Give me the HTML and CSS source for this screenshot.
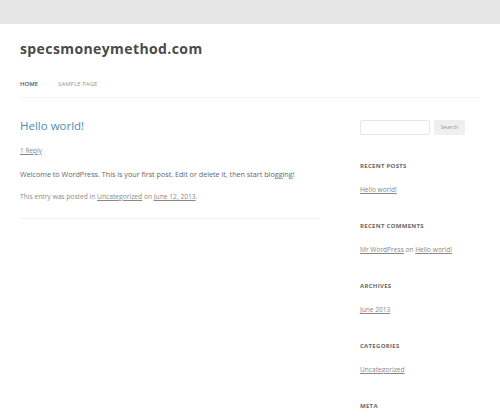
FILE: index.html
```html
<!DOCTYPE html>
<html>
<head>
<meta charset="utf-8">
<link rel="stylesheet" href="styles.css">
</head>
<body>
<div class="topband"></div>
<div class="page">
  <header class="site-header">
    <h1 class="site-title">specsmoneymethod.com</h1>
    <nav class="nav">
      <a class="nav-item current">HOME</a>
      <a class="nav-item">SAMPLE PAGE</a>
    </nav>
  </header>
  <div class="main">
    <div class="content">
      <article class="post">
        <h2 class="entry-title">Hello world!</h2>
        <div class="reply"><a>1 Reply</a></div>
        <p class="entry-content">Welcome to WordPress. This is your first post. Edit or delete it, then start blogging!</p>
        <p class="entry-meta">This entry was posted in <a>Uncategorized</a> on <a>June 12, 2013</a>.</p>
      </article>
    </div>
    <aside class="sidebar">
      <div class="search">
        <div class="search-input"></div>
        <div class="search-btn">Search</div>
      </div>
      <div class="widget">
        <h3 class="widget-title">RECENT POSTS</h3>
        <div class="widget-body"><a>Hello world!</a></div>
      </div>
      <div class="widget">
        <h3 class="widget-title">RECENT COMMENTS</h3>
        <div class="widget-body"><a>Mr WordPress</a> on <a>Hello world!</a></div>
      </div>
      <div class="widget">
        <h3 class="widget-title">ARCHIVES</h3>
        <div class="widget-body"><a>June 2013</a></div>
      </div>
      <div class="widget">
        <h3 class="widget-title">CATEGORIES</h3>
        <div class="widget-body"><a>Uncategorized</a></div>
      </div>
      <div class="widget">
        <h3 class="widget-title">META</h3>
      </div>
    </aside>
  </div>
</div>
</body>
</html>
```
FILE: styles.css
```css
html, body {
  margin: 0;
  padding: 0;
  background: #ffffff;
  font-family: "Open Sans", "Liberation Sans", sans-serif;
  color: #444;
  overflow: hidden;
}
.topband {
  height: 24px;
  background: #e6e6e6;
}
.page {
  padding: 0 20px;
}
.site-header {
  padding-top: 15px;
}
.site-title {
  margin: 0;
  font-size: 14px;
  font-weight: 700;
  letter-spacing: 0.4px;
  line-height: 20px;
  color: #4a4a4a;
}
.nav {
  display: flex;
  gap: 20px;
  margin-top: 21px;
  padding-bottom: 9px;
  border-bottom: 1px solid #f4f4f4;
}
.nav-item {
  font-size: 6px;
  line-height: 8px;
  color: #999;
}
.nav-item.current {
  color: #555;
  font-weight: 600;
}
.main {
  display: flex;
  justify-content: space-between;
  padding-top: 21px;
}
.content {
  width: 300px;
}
.post {
  border-bottom: 1px solid #f0f0f0;
  padding-bottom: 17px;
}
.entry-title {
  margin: 0;
  font-size: 11.5px;
  font-weight: 400;
  line-height: 14px;
  color: #4a8db3;
}
.reply {
  margin-top: 14px;
  font-size: 6.5px;
  line-height: 8px;
  color: #888;
}
.reply a, .entry-meta a, .widget-body a {
  text-decoration: underline;
}
.entry-content {
  margin: 15px 0 0;
  font-size: 7.2px;
  line-height: 8px;
  color: #666;
}
.entry-meta {
  margin: 15px 0 0;
  font-size: 6.7px;
  line-height: 8px;
  color: #8a8a8a;
}
.sidebar {
  width: 105px;
  padding-right: 15px;
}
.search {
  display: flex;
  gap: 4px;
  margin-top: 1px;
}
.search-input {
  width: 70px;
  height: 15px;
  border: 1px solid #e6e6e6;
  border-radius: 2px;
  box-sizing: border-box;
}
.search-btn {
  width: 31px;
  height: 15px;
  background: #efefef;
  border-radius: 2px;
  font-size: 5.5px;
  line-height: 15px;
  text-align: center;
  color: #999;
}
.widget {
  margin-top: 27px;
}
.widget-title {
  margin: 0;
  font-size: 6px;
  font-weight: 700;
  line-height: 8px;
  letter-spacing: 0.3px;
  color: #666;
}
.widget-body {
  margin-top: 16px;
  font-size: 6.6px;
  line-height: 8px;
  color: #888;
}
.widget + .widget {
  margin-top: 28px;
}
```
